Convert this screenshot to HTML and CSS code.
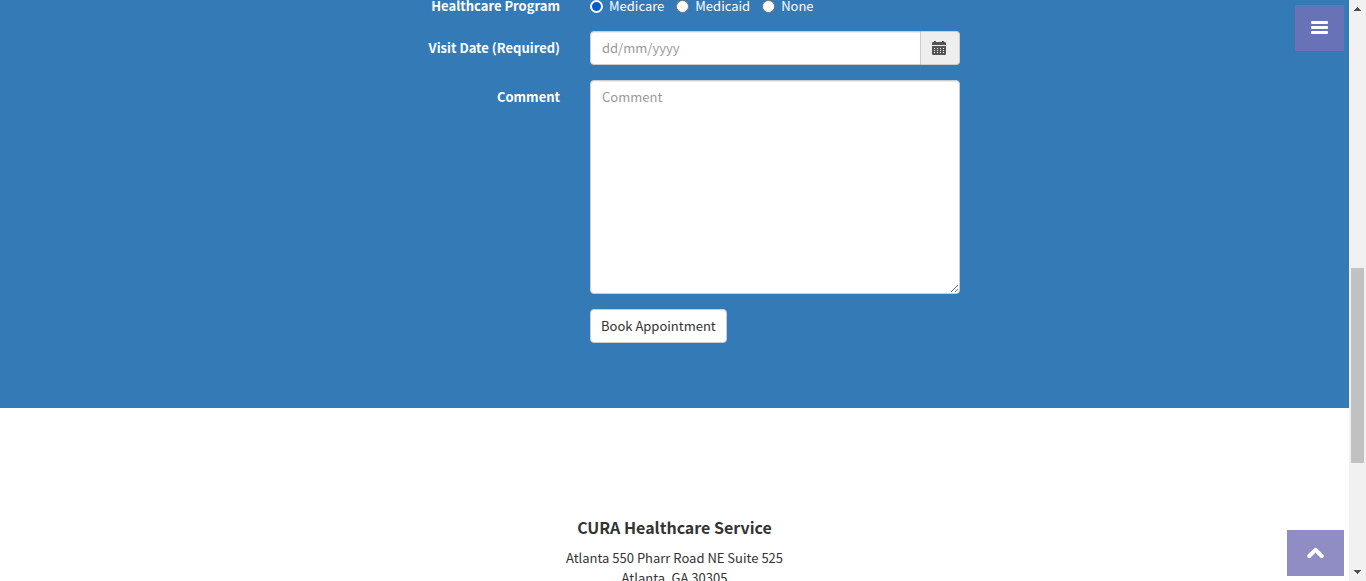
FILE: index.html
```html
<!DOCTYPE html>
<html lang="en">
<head>
<meta charset="utf-8">
<title>CURA Healthcare Service</title>
<link rel="stylesheet" href="styles.css">
</head>
<body>
<div class="viewport">
  <div class="page">
    <button class="menu-toggle" type="button" aria-label="Menu">
      <svg width="17" height="13" viewBox="0 0 17 13" aria-hidden="true"><path fill="#fff" d="M1 0h15q1 0 1 1v1q0 1-1 1H1Q0 3 0 2V1Q0 0 1 0zM1 5h15q1 0 1 1v1q0 1-1 1H1Q0 8 0 7V6Q0 5 1 5zM1 10h15q1 0 1 1v1q0 1-1 1H1q-1 0-1-1v-1q0-1 1-1z"/></svg>
    </button>
    <section class="appointment">
      <form class="form">
        <span class="label" id="program-label">Healthcare Program</span>
        <div class="programs" role="radiogroup" aria-labelledby="program-label">
          <label class="program"><input class="radio" type="radio" name="program" checked>Medicare</label>
          <label class="program"><input class="radio" type="radio" name="program">Medicaid</label>
          <label class="program"><input class="radio" type="radio" name="program">None</label>
        </div>
        <label class="label label-field" for="visit-date">Visit Date (Required)</label>
        <div class="date-group">
          <input class="control date" id="visit-date" type="text" placeholder="dd/mm/yyyy">
          <button class="calendar" type="button" aria-label="Choose date">
            <svg width="14" height="14" viewBox="0 0 14 14" aria-hidden="true"><path fill="#555" fill-rule="evenodd" d="M0 2Q0 1 1 1H2V0H4V1H10V0H12V1H13Q14 1 14 2V4H0zM0 5H14V13Q14 14 13 14H1Q0 14 0 13zM2 7v1h1V7zM5 7v1h1V7zM8 7v1h1V7zM11 7v1h1V7zM2 9v1h1V9zM5 9v1h1V9zM8 9v1h1V9zM11 9v1h1V9zM2 11v1h1v-1zM5 11v1h1v-1zM8 11v1h1v-1zM11 11v1h1v-1z"/></svg>
          </button>
        </div>
        <label class="label label-field" for="comment">Comment</label>
        <textarea class="control comment" id="comment" rows="10" placeholder="Comment"></textarea>
        <button class="submit" type="submit">Book Appointment</button>
      </form>
    </section>
    <footer class="footer">
      <h4 class="footer-title">CURA Healthcare Service</h4>
      <p class="address">Atlanta 550 Pharr Road NE Suite 525<br>Atlanta, GA 30305</p>
    </footer>
    <a class="to-top" href="#" aria-label="Back to top">
      <svg width="17" height="12" viewBox="0 0 17 12" aria-hidden="true"><path fill="none" stroke="#fff" stroke-width="4" stroke-linecap="round" stroke-linejoin="round" d="M2.3 9 8.5 2.8 14.7 9"/></svg>
    </a>
  </div>
  <div class="scrollbar" aria-hidden="true">
    <svg class="arrow" width="7" height="4" viewBox="0 0 7 4"><path fill="#505050" d="M3 0h1v1h1v1h1v1h1v1H0V3h1V2h1V1h1z"/></svg>
    <div class="track"><div class="thumb"></div></div>
    <svg class="arrow" width="7" height="4" viewBox="0 0 7 4"><path fill="#505050" d="M0 0h7v1H6v1H5v1H4v1H3V3H2V2H1V1H0z"/></svg>
  </div>
</div>
</body>
</html>
```

FILE: styles.css
```css
* { box-sizing: border-box; }

body {
  margin: 0;
  overflow: hidden;
  background: #fff;
  color: #333;
  font: 13px/20px "Source Sans Pro", "Noto Sans CJK SC", sans-serif;
}

button, input, textarea { font: inherit; color: inherit; }
svg { display: block; }

.viewport { display: flex; height: 100vh; }
.page { position: relative; flex: 1; min-width: 0; overflow: hidden; }

.appointment {
  padding: 0 15px 65px;
  background: #337ab7;
  color: #fff;
}

/* The form is scrolled slightly past its first row. */
.form {
  display: grid;
  grid-template-columns: 270px 370px;
  gap: 15px 30px;
  max-width: 769px;
  margin: 0 auto;
}

.label { font-weight: 700; text-align: right; margin-top: -4px; }
.label-field { margin-top: 0; padding-top: 7px; }

.programs { display: flex; gap: 12px; margin-top: -4px; }
.program { display: flex; align-items: center; gap: 6px; }

.radio {
  appearance: none;
  width: 13px;
  height: 13px;
  margin: 0;
  border: 1px solid #767676;
  border-radius: 50%;
  background: #fff;
}
.radio:checked { border: 2px solid #fff; background: #005cc8; }

.control {
  display: block;
  width: 100%;
  margin: 0;
  padding: 6px 11px;
  border: 1px solid #ccc;
  border-radius: 4px;
  background: #fff;
  color: #555;
  box-shadow: inset 0 1px 1px rgba(0, 0, 0, .075);
}
.control::placeholder { color: #999; opacity: 1; }

.date-group { display: flex; height: 34px; }
.date { flex: 1; min-width: 0; border-radius: 4px 0 0 4px; }
.calendar {
  width: 39px;
  padding: 0 11px;
  border: 1px solid #ccc;
  border-left: 0;
  border-radius: 0 4px 4px 0;
  background: #eee;
}
.comment { resize: vertical; }

.submit {
  grid-column: 2;
  justify-self: start;
  height: 34px;
  padding: 6px 10px;
  border: 1px solid #ccc;
  border-radius: 4px;
  background: #fff;
  color: #333;
}

.footer { padding: 109px 15px 0; text-align: center; }
.footer-title { margin: 0 0 11px; font-size: 16px; line-height: 20px; }
.address { margin: 0; }

.menu-toggle, .to-top {
  position: absolute;
  right: 5px;
  display: flex;
  align-items: center;
  justify-content: center;
  height: 46px;
  padding: 0 1px 1px 0;
  border: 0;
  background: rgba(116, 112, 182, .8);
}
.menu-toggle { top: 5px; width: 49px; }
.to-top { bottom: 5px; width: 57px; }

.scrollbar {
  display: flex;
  flex-direction: column;
  align-items: center;
  width: 17px;
  padding: 7px 0;
  background: #f1f1f1;
}
.track { flex: 1; width: 13px; }
.thumb { height: 34.9%; margin-top: 257px; background: #c1c1c1; }
```
